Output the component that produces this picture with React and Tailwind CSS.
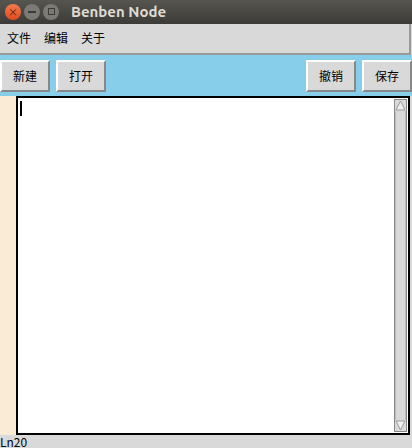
import React from 'react';

const font = { fontFamily: '"Noto Sans CJK SC", "DejaVu Sans", sans-serif' };

const TkButton = ({ label }) => (
  <div className="flex h-[32px] w-[50px] items-center justify-center border-2 border-t-white border-l-white border-r-[#888] border-b-[#888] bg-[#d9d9d9] text-[12px] text-black">
    {label}
  </div>
);

const App = () => {
  return (
    <div className="flex h-[448px] w-[412px] flex-col overflow-hidden bg-[#d9d9d9]" style={font}>
      {/* title bar */}
      <div className="flex h-[24px] items-center bg-gradient-to-b from-[#57554f] to-[#3c3b37] pl-[5px]">
        <div className="flex h-[16px] w-[16px] items-center justify-center rounded-full bg-gradient-to-b from-[#f47c4d] to-[#e0491c] text-[10px] leading-none text-[#5a1a08]">×</div>
        <div className="ml-[3px] flex h-[16px] w-[16px] items-center justify-center rounded-full bg-[#7b7a75]">
          <div className="h-[1.5px] w-[8px] bg-[#3c3b37]" />
        </div>
        <div className="ml-[3px] flex h-[16px] w-[16px] items-center justify-center rounded-full bg-[#7b7a75]">
          <div className="h-[7px] w-[7px] border border-[#3c3b37]" />
        </div>
        <div className="ml-[12px] text-[15px] font-bold text-[#dfdbd2]" style={{ fontFamily: 'Ubuntu, "DejaVu Sans", sans-serif' }}>
          Benben Node
        </div>
      </div>

      {/* menu bar */}
      <div className="mr-[1px] flex h-[31px] items-center gap-[13px] border-b-2 border-r-2 border-b-[#999] border-r-[#999] bg-[#d9d9d9] pl-[7px] text-[12px] text-black">
        <span>文件</span>
        <span>编辑</span>
        <span>关于</span>
      </div>

      {/* toolbar */}
      <div className="flex h-[41px] items-center justify-between bg-[#87ceeb] pt-[1px]">
        <div className="flex gap-[6px]">
          <TkButton label="新建" />
          <TkButton label="打开" />
        </div>
        <div className="flex gap-[6px]">
          <TkButton label="撤销" />
          <TkButton label="保存" />
        </div>
      </div>

      {/* editor */}
      <div className="flex h-[340px]">
        <div className="w-[16px] bg-[#faebd7]" />
        <div className="mr-[2px] flex flex-1 border-2 border-black bg-white">
          <div className="flex-1 pl-[2px] pt-[3px]">
            <div className="h-[15px] w-[1.5px] bg-black" />
          </div>
          <div className="my-[1px] mr-[1px] flex w-[13px] flex-col border border-[#888] bg-[#d9d9d9]">
            <svg width="11" height="11" viewBox="0 0 11 11" className="shrink-0">
              <polygon points="5.5,1 10,10 1,10" fill="#f0f0f0" stroke="#999" strokeWidth="1" />
            </svg>
            <div className="flex-1 border-x border-[#bbb] bg-[#d9d9d9]" />
            <svg width="11" height="11" viewBox="0 0 11 11" className="shrink-0">
              <polygon points="1,1 10,1 5.5,10" fill="#f0f0f0" stroke="#999" strokeWidth="1" />
            </svg>
          </div>
        </div>
      </div>

      {/* status bar */}
      <div className="flex flex-1 items-end bg-[#d9d9d9] text-[12px] leading-[13px] text-black">
        <span>Ln20</span>
      </div>
    </div>
  );
};

export default App;
